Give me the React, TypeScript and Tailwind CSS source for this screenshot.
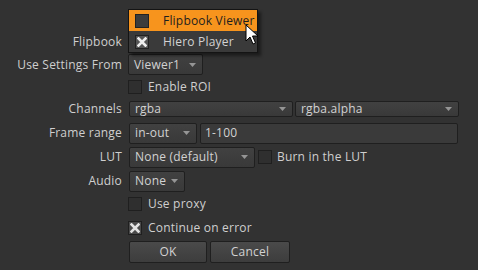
import React from "react";

const font = { fontFamily: '"Open Sans", "DejaVu Sans", sans-serif', letterSpacing: "0.2px" };

function Arrow() {
  return (
    <svg width="7" height="4" viewBox="0 0 7 4" className="shrink-0">
      <path d="M0 0 L7 0 L3.5 4 Z" fill="#959595" />
    </svg>
  );
}

function Dropdown({ text, w, h = 21 }: { text: string; w: number; h?: number }) {
  return (
    <div
      className="flex items-center justify-between pl-[5px] pr-[6px] rounded-[2px] border border-[#1f1f1f] bg-gradient-to-b from-[#414141] to-[#393939] text-[#d2d2d2]"
      style={{ width: w, height: h }}
    >
      <span className="leading-none">{text}</span>
      <Arrow />
    </div>
  );
}

function XMark({ color = "#e2e2e2" }: { color?: string }) {
  return (
    <svg width="10" height="10" viewBox="0 0 10 10">
      <path d="M1.5 1.5 L8.5 8.5 M8.5 1.5 L1.5 8.5" stroke={color} strokeWidth="2.6" strokeLinecap="square" />
    </svg>
  );
}

function Check({ checked = false }: { checked?: boolean }) {
  return (
    <div
      className={
        "w-[14px] h-[14px] shrink-0 border border-[#1f1f1f] flex items-center justify-center " +
        (checked ? "bg-[#4a4a4a]" : "bg-[#2f2f2f]")
      }
    >
      {checked && <XMark />}
    </div>
  );
}

function Row({
  label,
  h,
  children,
}: {
  label?: string;
  h: number;
  children?: React.ReactNode;
}) {
  return (
    <div className="flex items-center" style={{ height: h }}>
      <div className="w-[122px] text-right text-[#cfcfcf] shrink-0">{label}</div>
      <div className="flex items-center ml-[6px] gap-[3px]">{children}</div>
    </div>
  );
}

export default function App() {
  return (
    <div
      className="relative w-[478px] h-[270px] bg-[#323232] text-[12px] overflow-hidden"
      style={font}
    >
      <div className="flex flex-col pt-[30px]">
        <Row label="Flipbook" h={23}>
          <div className="w-[130px] h-[21px] rounded-[2px] border border-[#1f1f1f] bg-[#3d3d3d]" />
        </Row>
        <Row label="Use Settings From" h={23}>
          <Dropdown text="Viewer1" w={75} />
        </Row>
        <Row h={21}>
          <Check />
          <span className="ml-[3px] text-[#cfcfcf]">Enable ROI</span>
        </Row>
        <Row label="Channels" h={24}>
          <div className="ml-[1px] flex gap-[2px]">
            <Dropdown text="rgba" w={164} h={16} />
            <Dropdown text="rgba.alpha" w={164} h={16} />
          </div>
        </Row>
        <Row label="Frame range" h={24}>
          <div className="ml-[1px] flex gap-[3px]">
            <Dropdown text="in-out" w={68} />
            <div className="w-[258px] h-[21px] flex items-center pl-[4px] rounded-[2px] border border-[#1f1f1f] bg-[#3a3a3a] text-[#d2d2d2]">
              1-100
            </div>
          </div>
        </Row>
        <Row label="LUT" h={24}>
          <div className="ml-[1px] flex items-center gap-[3px]">
            <Dropdown text="None (default)" w={126} />
            <Check />
            <span className="ml-[2px] text-[#cfcfcf]">Burn in the LUT</span>
          </div>
        </Row>
        <Row label="Audio" h={24}>
          <div className="ml-[1px]">
            <Dropdown text="None" w={56} />
          </div>
        </Row>
        <Row h={22}>
          <Check />
          <span className="ml-[3px] text-[#cfcfcf]">Use proxy</span>
        </Row>
        <Row h={26}>
          <Check checked />
          <span className="ml-[3px] text-[#cfcfcf]">Continue on error</span>
        </Row>
        <Row h={22}>
          <div className="ml-[1px] flex gap-[3px]">
            <button className="w-[78px] h-[22px] rounded-[2px] border border-[#1f1f1f] bg-gradient-to-b from-[#4a4a4a] to-[#3d3d3d] text-[#d2d2d2]">
              OK
            </button>
            <button className="w-[80px] h-[22px] rounded-[2px] border border-[#1f1f1f] bg-gradient-to-b from-[#4a4a4a] to-[#3d3d3d] text-[#d2d2d2]">
              Cancel
            </button>
          </div>
        </Row>
      </div>

      {/* popup menu */}
      <div className="absolute left-[128px] top-[9px] w-[130px] border border-[#141414] bg-[#3a3a3a] shadow-[3px_3px_3px_rgba(0,0,0,0.45)] flex flex-col">
        <div className="h-[21px] flex items-center bg-[#f7941d] text-[#1e1e1e]">
          <div className="ml-[6px] w-[14px] h-[14px] border border-[#222] bg-[#3c3c3c]" />
          <span className="ml-[14px]">Flipbook Viewer</span>
        </div>
        <div className="h-[21px] flex items-center text-[#d2d2d2]">
          <div className="ml-[6px] w-[14px] h-[14px] border border-[#222] bg-[#555] flex items-center justify-center">
            <XMark color="#eeeeee" />
          </div>
          <span className="ml-[14px]">Hiero Player</span>
        </div>
      </div>

      {/* mouse cursor */}
      <svg
        className="absolute left-[245px] top-[24px]"
        width="14"
        height="22"
        viewBox="0 0 14 22"
      >
        <path
          d="M1 1 L1 17 L5 13 L8 20 L10.5 19 L7.5 12 L13 12 Z"
          fill="#ffffff"
          stroke="#000000"
          strokeWidth="1"
          strokeLinejoin="miter"
        />
      </svg>
    </div>
  );
}
